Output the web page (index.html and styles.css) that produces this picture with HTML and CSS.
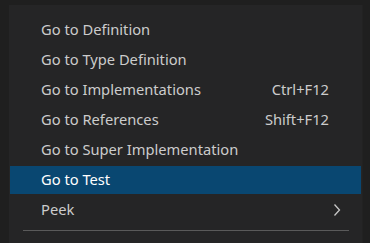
FILE: index.html
```html
<!DOCTYPE html>
<html lang="en">
<head>
    <meta charset="UTF-8">
    <title>Context Menu</title>
    <link rel="stylesheet" href="styles.css">
</head>
<body>
    <div class="menu">
        <div class="menu-item"><span class="label">Go to Definition</span></div>
        <div class="menu-item"><span class="label">Go to Type Definition</span></div>
        <div class="menu-item"><span class="label">Go to Implementations</span><span class="keys">Ctrl+F12</span></div>
        <div class="menu-item"><span class="label">Go to References</span><span class="keys">Shift+F12</span></div>
        <div class="menu-item"><span class="label">Go to Super Implementation</span></div>
        <div class="menu-item active"><span class="label">Go to Test</span></div>
        <div class="menu-item"><span class="label">Peek</span>
            <svg class="chevron" width="8" height="14" viewBox="0 0 8 14">
                <path d="M1.5 1.5 L6.5 7 L1.5 12.5" fill="none" stroke="#c8c8c8" stroke-width="1.3"/>
            </svg>
        </div>
        <div class="separator"></div>
    </div>
</body>
</html>
```

FILE: styles.css
```css
body {
    margin: 0;
    background-color: #1f1f1f;
    font-family: "Noto Sans", sans-serif;
    font-size: 14.7px;
    color: #cccccc;
    height: 243px;
    overflow: hidden;
}

.menu {
    margin: 5px 0 0 9px;
    width: 353px;
    height: 238px;
    background-color: #252526;
    padding: 10px 1px 0 1px;
    box-sizing: border-box;
    box-shadow: 1px 0 0 #222222;
}

.menu-item {
    height: 30px;
    box-sizing: border-box;
    border-top: 1px solid transparent;
    border-bottom: 1px solid transparent;
    background-clip: padding-box;
    display: flex;
    align-items: center;
    justify-content: space-between;
    padding: 0 32px 0 31px;
}

.menu-item .label,
.menu-item .keys {
    position: relative;
    top: -1px;
}

.menu-item.active {
    background-color: #094771;
    color: #ffffff;
}

.chevron {
    margin-right: -12px;
}

.separator {
    height: 1px;
    background-color: #5a5a5a;
    margin: 5px 12px 0 13px;
}
```
